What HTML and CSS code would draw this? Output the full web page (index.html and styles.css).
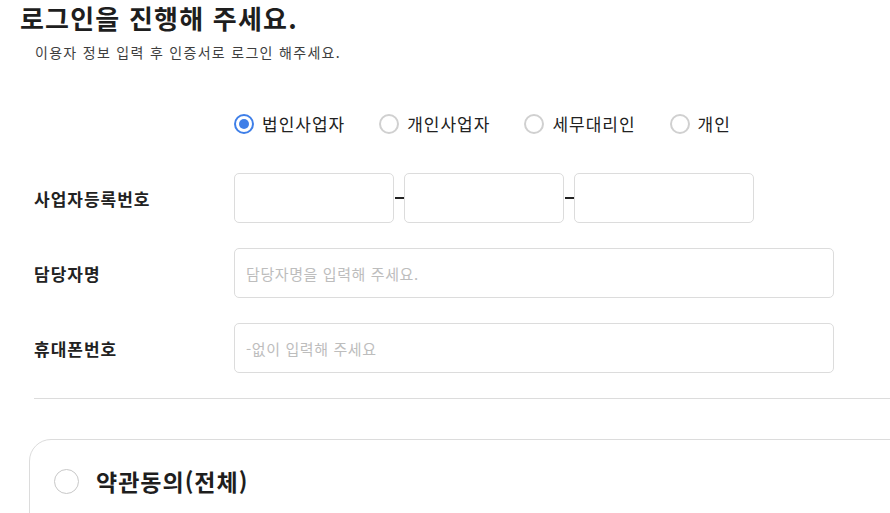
FILE: index.html
```html
<!DOCTYPE html>
<html lang="ko">
<head>
<meta charset="utf-8">
<link rel="stylesheet" href="styles.css">
</head>
<body>
<div class="page">
  <h1 class="title">로그인을 진행해 주세요.</h1>
  <p class="subtitle">이용자 정보 입력 후 인증서로 로그인 해주세요.</p>

  <div class="form">
    <div class="radios">
      <label class="radio"><span class="dot checked"></span><span>법인사업자</span></label>
      <label class="radio"><span class="dot"></span><span>개인사업자</span></label>
      <label class="radio"><span class="dot"></span><span>세무대리인</span></label>
      <label class="radio"><span class="dot"></span><span>개인</span></label>
    </div>

    <div class="row">
      <div class="label">사업자등록번호</div>
      <div class="biz">
        <input class="field w160" type="text">
        <span class="dash"></span>
        <input class="field w160" type="text">
        <span class="dash"></span>
        <input class="field w180" type="text">
      </div>
    </div>

    <div class="row">
      <div class="label">담당자명</div>
      <input class="field w600" type="text" placeholder="담당자명을 입력해 주세요.">
    </div>

    <div class="row">
      <div class="label">휴대폰번호</div>
      <input class="field w600" type="text" placeholder="-없이 입력해 주세요">
    </div>

    <div class="divider"></div>
  </div>

  <div class="card">
    <div class="agree">
      <span class="circle"></span>
      <span class="agree-text">약관동의(전체)</span>
    </div>
  </div>
</div>
</body>
</html>
```

FILE: styles.css
```css
html, body {
  margin: 0;
  padding: 0;
  overflow: hidden;
  background: #fff;
}
body {
  font-family: "Noto Sans CJK KR", "Noto Sans", sans-serif;
  color: #222;
}
.page {
  width: 1100px;
  padding-top: 1px;
}
.title {
  margin: 0;
  padding-left: 20px;
  font-size: 26px;
  letter-spacing: 1.2px;
  line-height: 34px;
  font-weight: 700;
  color: #1e1e1e;
}
.subtitle {
  margin: 7px 0 0 35px;
  font-size: 14px;
  letter-spacing: 1.3px;
  line-height: 20px;
  color: #3e3e3e;
}
.form {
  padding-left: 34px;
  margin-top: 52px;
}
.radios {
  display: flex;
  gap: 34px;
  margin-left: 200px;
  height: 20px;
  align-items: center;
}
.radio {
  display: flex;
  align-items: center;
  gap: 8px;
  font-size: 17px;
  letter-spacing: 1px;
  line-height: 20px;
  color: #222;
}
.dot {
  box-sizing: border-box;
  width: 20px;
  height: 20px;
  border-radius: 50%;
  border: 2px solid #d0d0d0;
  background: #fff;
  position: relative;
}
.dot.checked {
  border-color: #3f7fe8;
}
.dot.checked::after {
  content: "";
  position: absolute;
  left: 3px;
  top: 3px;
  width: 10px;
  height: 10px;
  border-radius: 50%;
  background: #3f7fe8;
}
.row {
  display: flex;
  align-items: center;
  height: 50px;
  margin-top: 25px;
}
.radios + .row {
  margin-top: 39px;
}
.label {
  width: 200px;
  font-size: 17px;
  letter-spacing: 1px;
  font-weight: 700;
  color: #222;
}
.biz {
  display: flex;
  align-items: center;
}
.field {
  box-sizing: border-box;
  height: 50px;
  border: 1px solid #dcdcdc;
  border-radius: 5px;
  padding: 0 11px;
  font-family: "Noto Sans CJK KR", "Noto Sans", sans-serif;
  font-size: 15px;
  letter-spacing: 0.6px;
  color: #222;
  background: #fff;
  outline: none;
}
.field::placeholder {
  color: #bdbdbd;
}
.w160 { width: 160px; }
.w180 { width: 180px; }
.w600 { width: 600px; }
.dash {
  width: 10px;
  display: flex;
  justify-content: center;
}
.dash::before {
  content: "";
  width: 9px;
  height: 2px;
  background: #222;
}
.divider {
  margin-top: 25px;
  height: 1px;
  background: #dcdcdc;
}
.card {
  margin: 40px 0 0 29px;
  border: 1px solid #dcdcdc;
  border-radius: 22px;
  padding: 29px 24px 40px 24px;
}
.agree {
  display: flex;
  align-items: center;
  gap: 17px;
  height: 25px;
}
.circle {
  box-sizing: border-box;
  width: 25px;
  height: 25px;
  border-radius: 50%;
  border: 1px solid #c8c8c8;
}
.agree-text {
  font-size: 23px;
  letter-spacing: 1px;
  font-weight: 700;
  color: #1e1e1e;
  line-height: 25px;
}
```
